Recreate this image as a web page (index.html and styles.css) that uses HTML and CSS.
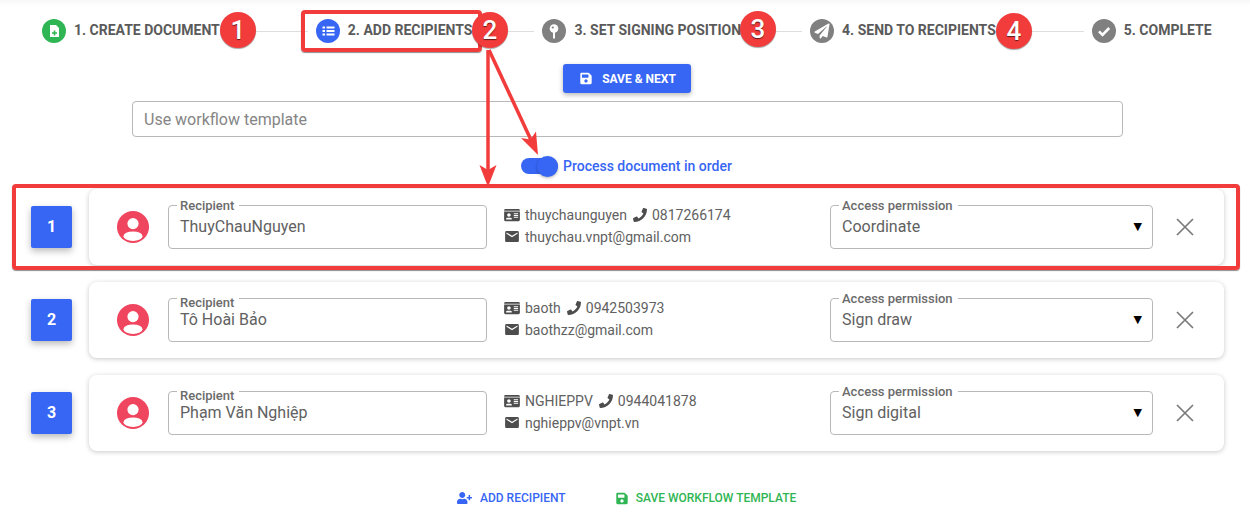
FILE: index.html
```html
<!DOCTYPE html>
<html lang="en">
<head>
    <meta charset="UTF-8">
    <meta name="viewport" content="width=device-width, initial-scale=1.0">
    <title>Add Recipients</title>
    <link rel="stylesheet" href="styles.css">
</head>
<body>
    <svg class="icon-defs" aria-hidden="true">
        <symbol id="i-save" viewBox="0 0 448 512"><path d="M433.941 129.941l-83.882-83.882A48 48 0 0 0 316.118 32H48C21.49 32 0 53.49 0 80v352c0 26.51 21.49 48 48 48h352c26.51 0 48-21.49 48-48V163.882a48 48 0 0 0-14.059-33.941zM224 416c-35.346 0-64-28.654-64-64 0-35.346 28.654-64 64-64s64 28.654 64 64c0 35.346-28.654 64-64 64zm96-304.52V212c0 6.627-5.373 12-12 12H76c-6.627 0-12-5.373-12-12V108c0-6.627 5.373-12 12-12h228.52c3.183 0 6.235 1.264 8.485 3.515l3.48 3.48A11.996 11.996 0 0 1 320 111.48z"/></symbol>
        <symbol id="i-phone" viewBox="0 0 512 512"><path d="M493.4 24.6l-104-24c-11.3-2.6-22.9 3.3-27.5 13.9l-48 112c-4.2 9.8-1.4 21.3 6.9 28l60.6 49.6c-36 76.7-98.9 140.5-177.2 177.2l-49.6-60.6c-6.8-8.3-18.2-11.1-28-6.9l-112 48C3.9 366.5-2 378.1.6 389.4l24 104C27.1 504.2 36.7 512 48 512c256.1 0 464-207.5 464-464 0-11.2-7.7-20.9-18.6-23.4z"/></symbol>
        <symbol id="i-card" viewBox="0 0 576 512"><path d="M528 32H48C21.5 32 0 53.5 0 80v16h576V80c0-26.5-21.5-48-48-48zM0 432c0 26.5 21.5 48 48 48h480c26.5 0 48-21.5 48-48V128H0v304zm352-232c0-4.4 3.6-8 8-8h144c4.4 0 8 3.6 8 8v16c0 4.4-3.6 8-8 8H360c-4.4 0-8-3.6-8-8v-16zm0 64c0-4.4 3.6-8 8-8h144c4.4 0 8 3.6 8 8v16c0 4.4-3.6 8-8 8H360c-4.4 0-8-3.6-8-8v-16zm0 64c0-4.4 3.6-8 8-8h144c4.4 0 8 3.6 8 8v16c0 4.4-3.6 8-8 8H360c-4.4 0-8-3.6-8-8v-16zM176 192c35.3 0 64 28.7 64 64s-28.7 64-64 64-64-28.7-64-64 28.7-64 64-64zM67.1 396.2C75.5 370.5 99.6 352 128 352h8.2c12.3 5.1 25.7 8 39.8 8s27.6-2.9 39.8-8h8.2c28.4 0 52.5 18.5 60.9 44.2 3.2 9.9-5.2 19.8-15.6 19.8H82.7c-10.4 0-18.8-10-15.6-19.8z"/></symbol>
        <symbol id="i-mail" viewBox="2 4 20 16"><path d="M20 4H4c-1.1 0-1.99.9-1.99 2L2 18c0 1.1.9 2 2 2h16c1.1 0 2-.9 2-2V6c0-1.1-.9-2-2-2zm0 4l-8 5-8-5V6l8 5 8-5v2z"/></symbol>
        <symbol id="i-user" viewBox="0 0 32 32"><circle cx="16" cy="16" r="16" fill="#f0455f"/><circle cx="16" cy="12.600" r="5.600" fill="#fff"/><ellipse cx="16" cy="25.200" rx="9.500" ry="4.800" fill="#fff"/></symbol>
        <symbol id="i-close" viewBox="0 0 20 20"><path d="M2 2l16 16M18 2L2 18" fill="none" stroke="currentColor" stroke-width="1.700"/></symbol>
    </svg>

    <div class="page">
        <div class="stepper">
            <div class="step">
                <span class="step-icon step-green">
                    <svg viewBox="0 0 24 24" width="24" height="24"><path fill="#fff" d="M8 6h6l3 3v9H8z"/><path fill="#2fb553" d="M11.700 11.500h1.600v1.700H15v1.500h-1.700v1.700h-1.600v-1.700H10v-1.500h1.700z"/></svg>
                </span>
                <span class="step-text">1. CREATE DOCUMENT</span>
            </div>
            <div class="step-line line-1"></div>
            <div class="step">
                <span class="step-icon step-blue">
                    <svg viewBox="0 0 24 24" width="24" height="24"><path fill="#fff" d="M10.500 7.500h8v2h-8zM10.500 11h8v2h-8zM10.500 14.500h8v2h-8zM6.500 7.500h2.500v2H6.500zM6.500 11h2.500v2H6.500zM6.500 14.500h2.500v2H6.500z"/></svg>
                </span>
                <span class="step-text">2. ADD RECIPIENTS</span>
            </div>
            <div class="step-line line-2"></div>
            <div class="step">
                <span class="step-icon">
                    <svg viewBox="0 0 24 24" width="24" height="24"><circle cx="12" cy="9.500" r="4.300" fill="#fff"/><path fill="#fff" d="M11 13h2v6.500h-2z"/><circle cx="10.800" cy="8.500" r="1.100" fill="#808080"/></svg>
                </span>
                <span class="step-text">3. SET SIGNING POSITION</span>
            </div>
            <div class="step-line line-3"></div>
            <div class="step">
                <span class="step-icon">
                    <svg viewBox="-150 -150 812 812" width="24" height="24"><path fill="#fff" d="M476 3.200L12.500 270.600c-18.100 10.400-15.800 35.600 2.200 43.200L121 358.400l287.300-253.200c5.500-4.900 13.300 2.600 8.600 8.300L176 407v80.500c0 23.600 28.500 32.900 42.500 15.800L282 426l124.600 52.200c14.200 6 30.400-2.900 33-18.200l72-432C515 7.800 493.300-6.800 476 3.200z"/></svg>
                </span>
                <span class="step-text">4. SEND TO RECIPIENTS</span>
            </div>
            <div class="step-line line-4"></div>
            <div class="step">
                <span class="step-icon">
                    <svg viewBox="0 0 24 24" width="24" height="24"><path fill="none" stroke="#fff" stroke-width="2.600" d="M7 12.300l3.500 3.500L17.200 9"/></svg>
                </span>
                <span class="step-text">5. COMPLETE</span>
            </div>
        </div>

        <div class="save-wrap">
            <button class="btn-save"><svg class="btn-icon"><use href="#i-save"/></svg>SAVE &amp; NEXT</button>
        </div>

        <div class="template-input">Use workflow template</div>

        <div class="order-toggle">
            <span class="toggle"><span class="toggle-thumb"></span></span>
            <span class="toggle-label">Process document in order</span>
        </div>

        <div class="recipients">
            <div class="recipient-row">
                <div class="row-number">1</div>
                <div class="card">
                    <svg class="avatar"><use href="#i-user"/></svg>
                    <div class="field field-name">
                        <span class="field-label">Recipient</span>
                        <span class="field-value">ThuyChauNguyen</span>
                    </div>
                    <div class="contact">
                        <div class="contact-line"><svg class="ci ci-card"><use href="#i-card"/></svg>thuychaunguyen<svg class="ci ci-phone"><use href="#i-phone"/></svg>0817266174</div>
                        <div class="contact-line"><svg class="ci ci-mail"><use href="#i-mail"/></svg>thuychau.vnpt@gmail.com</div>
                    </div>
                    <div class="field field-access">
                        <span class="field-label">Access permission</span>
                        <span class="field-value">Coordinate</span>
                        <span class="caret">▼</span>
                    </div>
                    <svg class="close"><use href="#i-close"/></svg>
                </div>
            </div>

            <div class="recipient-row">
                <div class="row-number">2</div>
                <div class="card">
                    <svg class="avatar"><use href="#i-user"/></svg>
                    <div class="field field-name">
                        <span class="field-label label-low">Recipient</span>
                        <span class="field-value">Tô Hoài Bảo</span>
                    </div>
                    <div class="contact">
                        <div class="contact-line"><svg class="ci ci-card"><use href="#i-card"/></svg>baoth<svg class="ci ci-phone"><use href="#i-phone"/></svg>0942503973</div>
                        <div class="contact-line"><svg class="ci ci-mail"><use href="#i-mail"/></svg>baothzz@gmail.com</div>
                    </div>
                    <div class="field field-access">
                        <span class="field-label">Access permission</span>
                        <span class="field-value">Sign draw</span>
                        <span class="caret">▼</span>
                    </div>
                    <svg class="close"><use href="#i-close"/></svg>
                </div>
            </div>

            <div class="recipient-row">
                <div class="row-number">3</div>
                <div class="card">
                    <svg class="avatar"><use href="#i-user"/></svg>
                    <div class="field field-name">
                        <span class="field-label label-low">Recipient</span>
                        <span class="field-value">Phạm Văn Nghiệp</span>
                    </div>
                    <div class="contact">
                        <div class="contact-line"><svg class="ci ci-card"><use href="#i-card"/></svg>NGHIEPPV<svg class="ci ci-phone"><use href="#i-phone"/></svg>0944041878</div>
                        <div class="contact-line"><svg class="ci ci-mail"><use href="#i-mail"/></svg>nghieppv@vnpt.vn</div>
                    </div>
                    <div class="field field-access">
                        <span class="field-label">Access permission</span>
                        <span class="field-value">Sign digital</span>
                        <span class="caret">▼</span>
                    </div>
                    <svg class="close"><use href="#i-close"/></svg>
                </div>
            </div>
        </div>

        <div class="actions">
            <span class="action action-blue">
                <svg class="action-icon action-icon-user" viewBox="0 0 640 512"><path d="M624 208h-64v-64c0-8.800-7.200-16-16-16h-32c-8.800 0-16 7.200-16 16v64h-64c-8.800 0-16 7.200-16 16v32c0 8.800 7.200 16 16 16h64v64c0 8.800 7.200 16 16 16h32c8.800 0 16-7.200 16-16v-64h64c8.800 0 16-7.200 16-16v-32c0-8.800-7.200-16-16-16zm-400 48c70.700 0 128-57.300 128-128S294.700 0 224 0 96 57.300 96 128s57.300 128 128 128zm89.600 32h-16.700c-22.200 10.200-46.900 16-72.900 16s-50.600-5.800-72.900-16h-16.700C60.200 288 0 348.200 0 422.400V464c0 26.500 21.500 48 48 48h352c26.500 0 48-21.500 48-48v-41.600c0-74.200-60.200-134.400-134.400-134.400z"/></svg>
                ADD RECIPIENT
            </span>
            <span class="action action-green">
                <svg class="action-icon"><use href="#i-save"/></svg>
                SAVE WORKFLOW TEMPLATE
            </span>
        </div>

        <!-- red callouts drawn on top of the screenshot -->
        <div class="callout-box box-step"></div>
        <div class="callout-box box-row"></div>
        <svg class="callout-arrows" width="1250" height="528">
            <path d="M488 50V172" stroke="#f23c3c" stroke-width="3.500" fill="none"/>
            <path d="M488 187l-8.500-22 8.500 5 8.500-5z" fill="#f23c3c"/>
            <path d="M489 50L531 140" stroke="#f23c3c" stroke-width="3.500" fill="none"/>
            <path d="M538 155l-17-17 9.500 1.500 5.500-8z" fill="#f23c3c"/>
        </svg>
        <div class="badge badge-1">1</div>
        <div class="badge badge-2">2</div>
        <div class="badge badge-3">3</div>
        <div class="badge badge-4">4</div>
    </div>
</body>
</html>
```

FILE: styles.css
```css
* {
    box-sizing: border-box;
}
body {
    margin: 0;
    background: #fff;
    font-family: Roboto, "Noto Sans", sans-serif;
    color: #616161;
}
.icon-defs {
    display: none;
}
.page {
    position: relative;
    width: 1250px;
    height: 528px;
    overflow: hidden;
    background: linear-gradient(#f7f7f7, #fff 6px);
}

/* stepper */
.stepper {
    display: flex;
    align-items: center;
    height: 62px;
    padding-left: 42px;
}
.step {
    display: flex;
    align-items: center;
    flex: none;
    gap: 8px;
}
.step-icon {
    display: flex;
    width: 24px;
    height: 24px;
    border-radius: 50%;
    background: #808080;
}
.step-green {
    background: #2fb553;
}
.step-blue {
    background: #3766f4;
}
.step-text {
    margin-top: -2px;
    font-size: 14px;
    font-weight: 700;
    color: #5a5a5a;
    white-space: nowrap;
}
.step-line {
    flex: none;
    height: 1px;
    margin: 0 8px;
    background: #dedede;
}
.line-1 { width: 80px; }
.line-2 { width: 54px; }
.line-3 { width: 53px; }
.line-4 { width: 80px; }

/* save button */
.save-wrap {
    display: flex;
    justify-content: center;
    margin-top: 2px;
    padding-left: 4px;
}
.btn-save {
    display: flex;
    align-items: center;
    justify-content: center;
    gap: 10px;
    width: 128px;
    height: 29px;
    padding: 0 0 0 2px;
    border: none;
    border-radius: 3px;
    background: #3766f4;
    color: #fff;
    font-family: inherit;
    font-size: 12px;
    font-weight: 700;
    box-shadow: 0 2px 5px rgba(0, 0, 0, 0.28);
}
.btn-icon {
    width: 12px;
    height: 13px;
    fill: #fff;
}

/* template input */
.template-input {
    display: flex;
    align-items: center;
    width: 991px;
    height: 36px;
    margin: 8px 0 0 132px;
    padding-left: 11px;
    border: 1px solid #b8b8b8;
    border-radius: 4px;
    font-size: 16px;
    color: #858585;
}

/* toggle */
.order-toggle {
    display: flex;
    align-items: center;
    gap: 5px;
    height: 22px;
    margin: 18px 0 0 521px;
}
.toggle {
    position: relative;
    width: 37px;
    height: 16px;
    border-radius: 8px;
    background: #3766f4;
}
.toggle-thumb {
    position: absolute;
    top: -2.500px;
    right: 0;
    width: 21px;
    height: 21px;
    border-radius: 50%;
    background: #3766f4;
    box-shadow: 0 1px 3px rgba(0, 0, 0, 0.3);
}
.toggle-label {
    font-size: 14px;
    font-weight: 500;
    color: #3766f4;
}

/* recipient rows */
.recipients {
    display: flex;
    flex-direction: column;
    gap: 17px;
    margin-top: 12px;
    padding: 0 26px 0 31px;
}
.recipient-row {
    display: flex;
    align-items: center;
    gap: 17px;
}
.row-number {
    display: flex;
    align-items: center;
    justify-content: center;
    flex: none;
    width: 41px;
    height: 42px;
    padding-bottom: 2px;
    border-radius: 2px;
    background: #3766f4;
    color: #fff;
    font-size: 16px;
    font-weight: 700;
    box-shadow: 0 3px 7px rgba(0, 0, 0, 0.28);
}
.card {
    display: flex;
    align-items: center;
    flex: 1;
    height: 76px;
    padding: 0 29px 0 28px;
    border-radius: 8px;
    background: #fff;
    box-shadow: 0 1px 5px rgba(0, 0, 0, 0.22);
}
.avatar {
    flex: none;
    width: 32px;
    height: 32px;
    margin-right: 19px;
}
.field {
    position: relative;
    display: flex;
    align-items: center;
    flex: none;
    height: 44px;
    padding: 0 0 1px 11px;
    border: 1px solid #b8b8b8;
    border-radius: 4px;
    background: #fff;
}
.field-name {
    width: 319px;
}
.field-access {
    width: 323px;
    justify-content: space-between;
    padding-right: 10px;
}
.field-label {
    position: absolute;
    top: -7px;
    left: 8px;
    padding: 0 5px 0 3px;
    background: #fff;
    font-size: 13px;
    font-weight: 500;
    line-height: 13px;
    color: #6b6b6b;
}
.label-low {
    top: -3px;
    background: linear-gradient(#fff, #fff 5px, transparent 5px);
}
.field-value {
    font-size: 16px;
    color: #616161;
}
.caret {
    font-family: "DejaVu Sans", sans-serif;
    font-size: 11px;
    color: #000;
}
.contact {
    flex: 1;
    margin-bottom: 3px;
    padding-left: 17px;
    font-size: 14px;
    color: #616161;
}
.contact-line {
    display: flex;
    align-items: center;
    height: 22px;
    white-space: nowrap;
}
.ci {
    flex: none;
    fill: #4d4d4d;
}
.ci-card {
    width: 16px;
    height: 14px;
    margin-right: 5px;
}
.ci-phone {
    width: 14px;
    height: 14px;
    margin: 0 5px 0 6px;
}
.ci-mail {
    width: 14px;
    height: 11px;
    margin: 0 6px 0 1px;
}
.close {
    flex: none;
    width: 20px;
    height: 20px;
    margin-left: 22px;
    color: #7a7a7a;
}

/* bottom actions */
.actions {
    display: flex;
    align-items: center;
    gap: 50px;
    margin: 40px 0 0 457px;
    font-size: 12px;
    font-weight: 500;
}
.action {
    display: flex;
    align-items: center;
    gap: 8px;
}
.action-blue {
    color: #3766f4;
    fill: #3766f4;
}
.action-green {
    color: #2fb553;
    fill: #2fb553;
}
.action-icon {
    width: 12px;
    height: 13px;
}
.action-icon-user {
    width: 15px;
    height: 12px;
}

/* red callouts */
.callout-box {
    position: absolute;
    border: 4px solid #f23c3c;
    border-radius: 4px;
    box-shadow: 0 1px 1px rgba(0, 0, 0, 0.45);
}
.box-step {
    left: 301px;
    top: 10px;
    width: 181px;
    height: 42px;
}
.box-row {
    left: 12px;
    top: 184px;
    width: 1228px;
    height: 86px;
}
.callout-arrows {
    position: absolute;
    left: 0;
    top: 0;
}
.badge {
    position: absolute;
    display: flex;
    align-items: center;
    justify-content: center;
    width: 36px;
    height: 36px;
    border-radius: 50%;
    background: #f23c3c;
    color: #fff;
    font-family: Roboto, "Liberation Sans", sans-serif;
    font-size: 26px;
    font-weight: 500;
    text-shadow: 0 1px 1px rgba(0, 0, 0, 0.6);
    box-shadow: 0 1px 1px rgba(0, 0, 0, 0.35);
}
.badge-1 { left: 220px; top: 12px; }
.badge-2 { left: 472px; top: 12px; }
.badge-3 { left: 740px; top: 11px; }
.badge-4 { left: 996px; top: 13px; }
```
